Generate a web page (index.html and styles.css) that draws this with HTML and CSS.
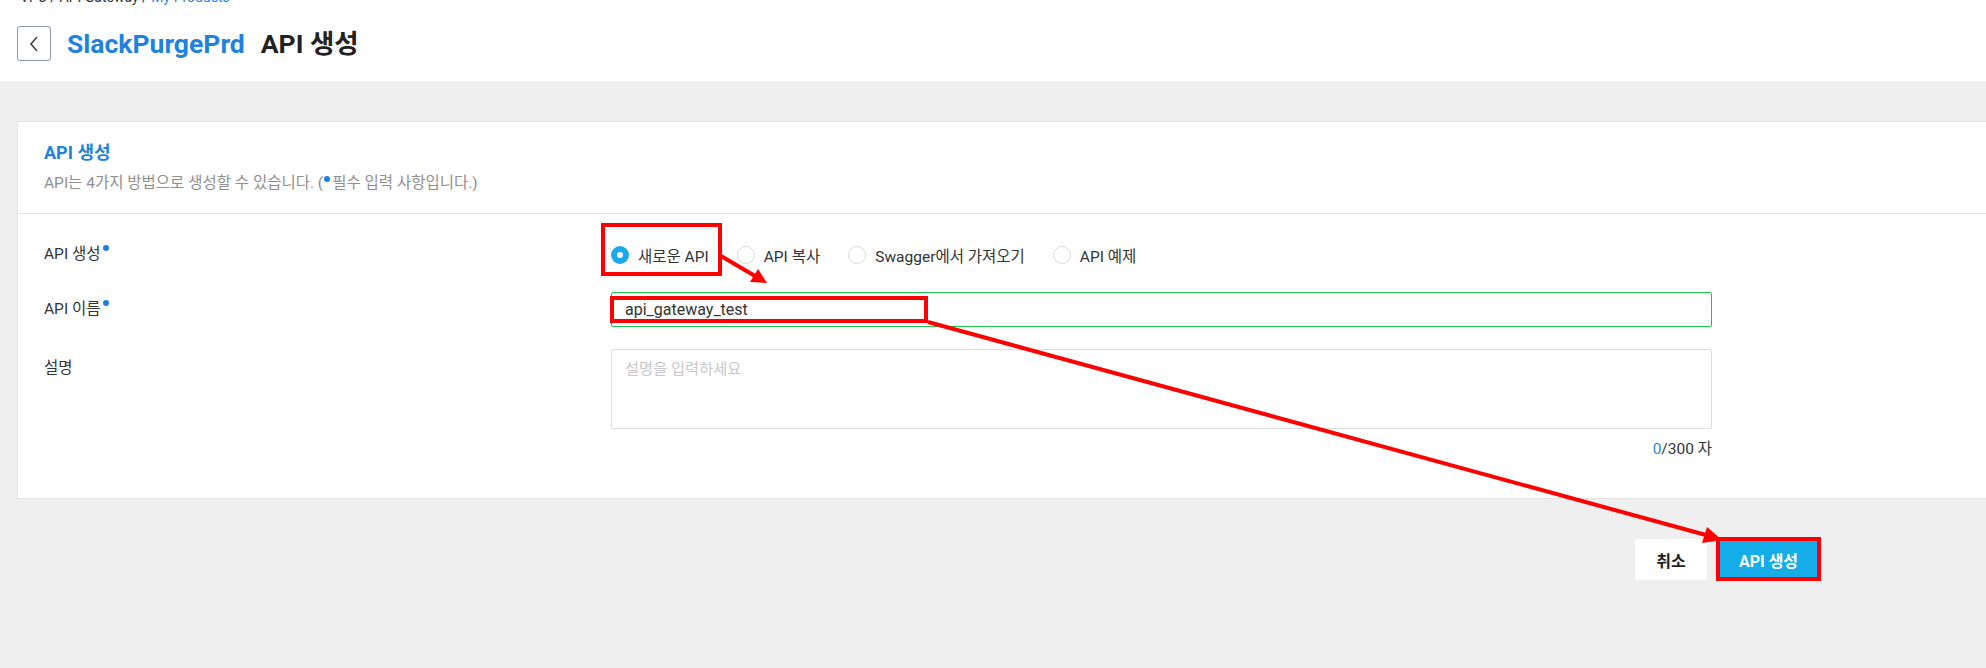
FILE: index.html
```html
<!DOCTYPE html>
<html lang="ko">
<head>
<meta charset="utf-8">
<title>API 생성</title>
<link rel="stylesheet" href="styles.css">
</head>
<body>
<div class="page">
  <header class="top">
    <div class="crumbs"><div class="crumbs-inner">VPC / API Gateway / <span class="crumb-link">My Products</span></div></div>
    <div class="title-row">
      <button class="back" type="button" aria-label="뒤로">
        <svg width="12" height="18" viewBox="0 0 12 18"><path d="M9 2 L3 9 L9 16" fill="none" stroke="#444" stroke-width="1.6"/></svg>
      </button>
      <h1 class="title"><span class="prod">SlackPurgePrd</span><span class="act">API 생성</span></h1>
    </div>
  </header>

  <main class="main">
    <section class="card">
      <div class="card-head">
        <h2 class="card-title">API 생성</h2>
        <p class="card-desc">API는 4가지 방법으로 생성할 수 있습니다. (<i class="req"></i>필수 입력 사항입니다.)</p>
      </div>
      <div class="form">
        <div class="row row-radio">
          <div class="label">API 생성<i class="req sup"></i></div>
          <div class="ctrl radios">
            <label class="opt"><span class="radio on"></span>새로운 API</label>
            <label class="opt"><span class="radio"></span>API 복사</label>
            <label class="opt"><span class="radio"></span>Swagger에서 가져오기</label>
            <label class="opt"><span class="radio"></span>API 예제</label>
          </div>
        </div>
        <div class="row row-input">
          <div class="label">API 이름<i class="req sup"></i></div>
          <div class="ctrl"><div class="input">api_gateway_test</div></div>
        </div>
        <div class="row row-text">
          <div class="label">설명</div>
          <div class="ctrl">
            <div class="textarea"><span class="ph">설명을 입력하세요</span></div>
            <div class="counter"><span class="cnt">0</span>/300 자</div>
          </div>
        </div>
      </div>
    </section>

    <div class="actions">
      <button class="btn cancel" type="button">취소</button>
      <button class="btn primary" type="button">API 생성</button>
    </div>
  </main>

  <svg class="annot" width="1986" height="668" viewBox="0 0 1986 668">
    <g fill="none" stroke="#ff0000" stroke-width="4">
      <rect x="603" y="225" width="117" height="49"/>
      <rect x="612" y="298" width="314" height="23"/>
      <rect x="1718" y="539" width="101" height="40"/>
      <line x1="721" y1="256" x2="755" y2="276"/>
      <line x1="928" y1="322" x2="1706" y2="535"/>
    </g>
    <g fill="#ff0000">
      <polygon points="767,283 750,282 758,269"/>
      <polygon points="1722,540 1702,543 1707,527"/>
    </g>
  </svg>
</div>
</body>
</html>
```

FILE: styles.css
```css
* { box-sizing: border-box; }

html, body {
  margin: 0;
  padding: 0;
}

body {
  background: #efefef;
  font-family: Roboto, "Noto Sans CJK KR", "Noto Sans", sans-serif;
  color: #333;
  width: 1986px;
  height: 668px;
  overflow: hidden;
}

.page {
  position: relative;
  width: 1986px;
  height: 668px;
}

/* header */
.top {
  background: #fff;
  height: 81px;
  padding-left: 17px;
}

.crumbs {
  height: 5px;
  overflow: hidden;
  padding-left: 3px;
}

.crumbs-inner {
  margin-top: -11px;
  font-size: 14px;
  line-height: 16px;
  color: #333;
}

.crumb-link { color: #2f86e0; }

.title-row {
  display: flex;
  align-items: center;
  margin-top: 21px;
}

.back {
  width: 34px;
  height: 35px;
  border: 1px solid #8a98aa;
  border-radius: 3px;
  background: #fff;
  padding: 0;
  display: flex;
  align-items: center;
  justify-content: center;
}

.title {
  margin: 0 0 0 16px;
  font-size: 26.5px;
  font-weight: 700;
  display: flex;
  gap: 16px;
  line-height: 32px;
}

.prod { color: #2082dd; }
.act { color: #222; }

/* card */
.main { padding-left: 17px; }

.card {
  margin-top: 40px;
  background: #fff;
  border-top: 1px solid #e2e2e2;
  border-bottom: 1px solid #e2e2e2;
  border-left: 1px solid #e6e6e6;
}

.card-head {
  padding: 19px 26px 20px;
  border-bottom: 1px solid #e4e4e4;
}

.card-title {
  margin: 0;
  font-size: 18px;
  line-height: 24px;
  font-weight: 700;
  color: #2082dd;
}

.card-desc {
  margin: 8px 0 0;
  font-size: 15.5px;
  line-height: 20px;
  color: #8f8f8f;
}

.req {
  display: inline-block;
  width: 6px;
  height: 6px;
  border-radius: 50%;
  background: #1f7fe0;
  vertical-align: 6px;
  margin: 0 2px 0 1px;
}

.req.sup {
  vertical-align: 8px;
  margin-left: 3px;
}

.form {
  padding: 22px 274px 39px 26px;
}

.row {
  display: grid;
  grid-template-columns: 567px 1fr;
}

.label {
  font-size: 15.5px;
  color: #333;
}

.row-radio .label { line-height: 36px; }
.row-input { margin-top: 20px; }
.row-input .label { line-height: 35px; }
.row-text { margin-top: 22px; }
.row-text .label { line-height: 20px; padding-top: 9px; }

.radios {
  display: flex;
  align-items: center;
  height: 36px;
  padding-top: 1px;
  gap: 28px;
}

.opt {
  display: flex;
  align-items: center;
  gap: 9px;
  font-size: 15.5px;
  color: #333;
}

.radio {
  width: 18px;
  height: 18px;
  border-radius: 50%;
  border: 1px solid #dcdcdc;
  background: #fff;
  position: relative;
  flex: none;
}

.radio.on {
  border: none;
  background: #1ba8e8;
}

.radio.on::after {
  content: "";
  position: absolute;
  left: 6px;
  top: 6px;
  width: 6px;
  height: 6px;
  border-radius: 50%;
  background: #fff;
}

.input {
  height: 35px;
  border: 1px solid #1ec84a;
  border-radius: 2px;
  padding-left: 13px;
  font-size: 16px;
  line-height: 33px;
  color: #333;
}

.textarea {
  height: 80px;
  border: 1px solid #dedede;
  border-radius: 2px;
  padding: 9px 13px;
  font-size: 15.3px;
  line-height: 20px;
}

.ph { color: #c8c8c8; }

.counter {
  margin-top: 10px;
  text-align: right;
  font-size: 15.5px;
  line-height: 20px;
  color: #333;
}

.cnt { color: #2f86e0; }

/* actions */
.actions {
  display: flex;
  justify-content: flex-end;
  gap: 11px;
  margin-top: 40px;
  padding-right: 167px;
}

.btn {
  height: 41px;
  border: none;
  border-radius: 2px;
  font-family: Roboto, "Noto Sans CJK KR", sans-serif;
  font-size: 16px;
  font-weight: 700;
  padding: 0;
}

.cancel {
  width: 72px;
  background: #fff;
  color: #222;
}

.primary {
  width: 101px;
  background: #15ade8;
  color: #fff;
}

/* annotation overlay */
.annot {
  position: absolute;
  left: 0;
  top: 0;
  pointer-events: none;
}
```
